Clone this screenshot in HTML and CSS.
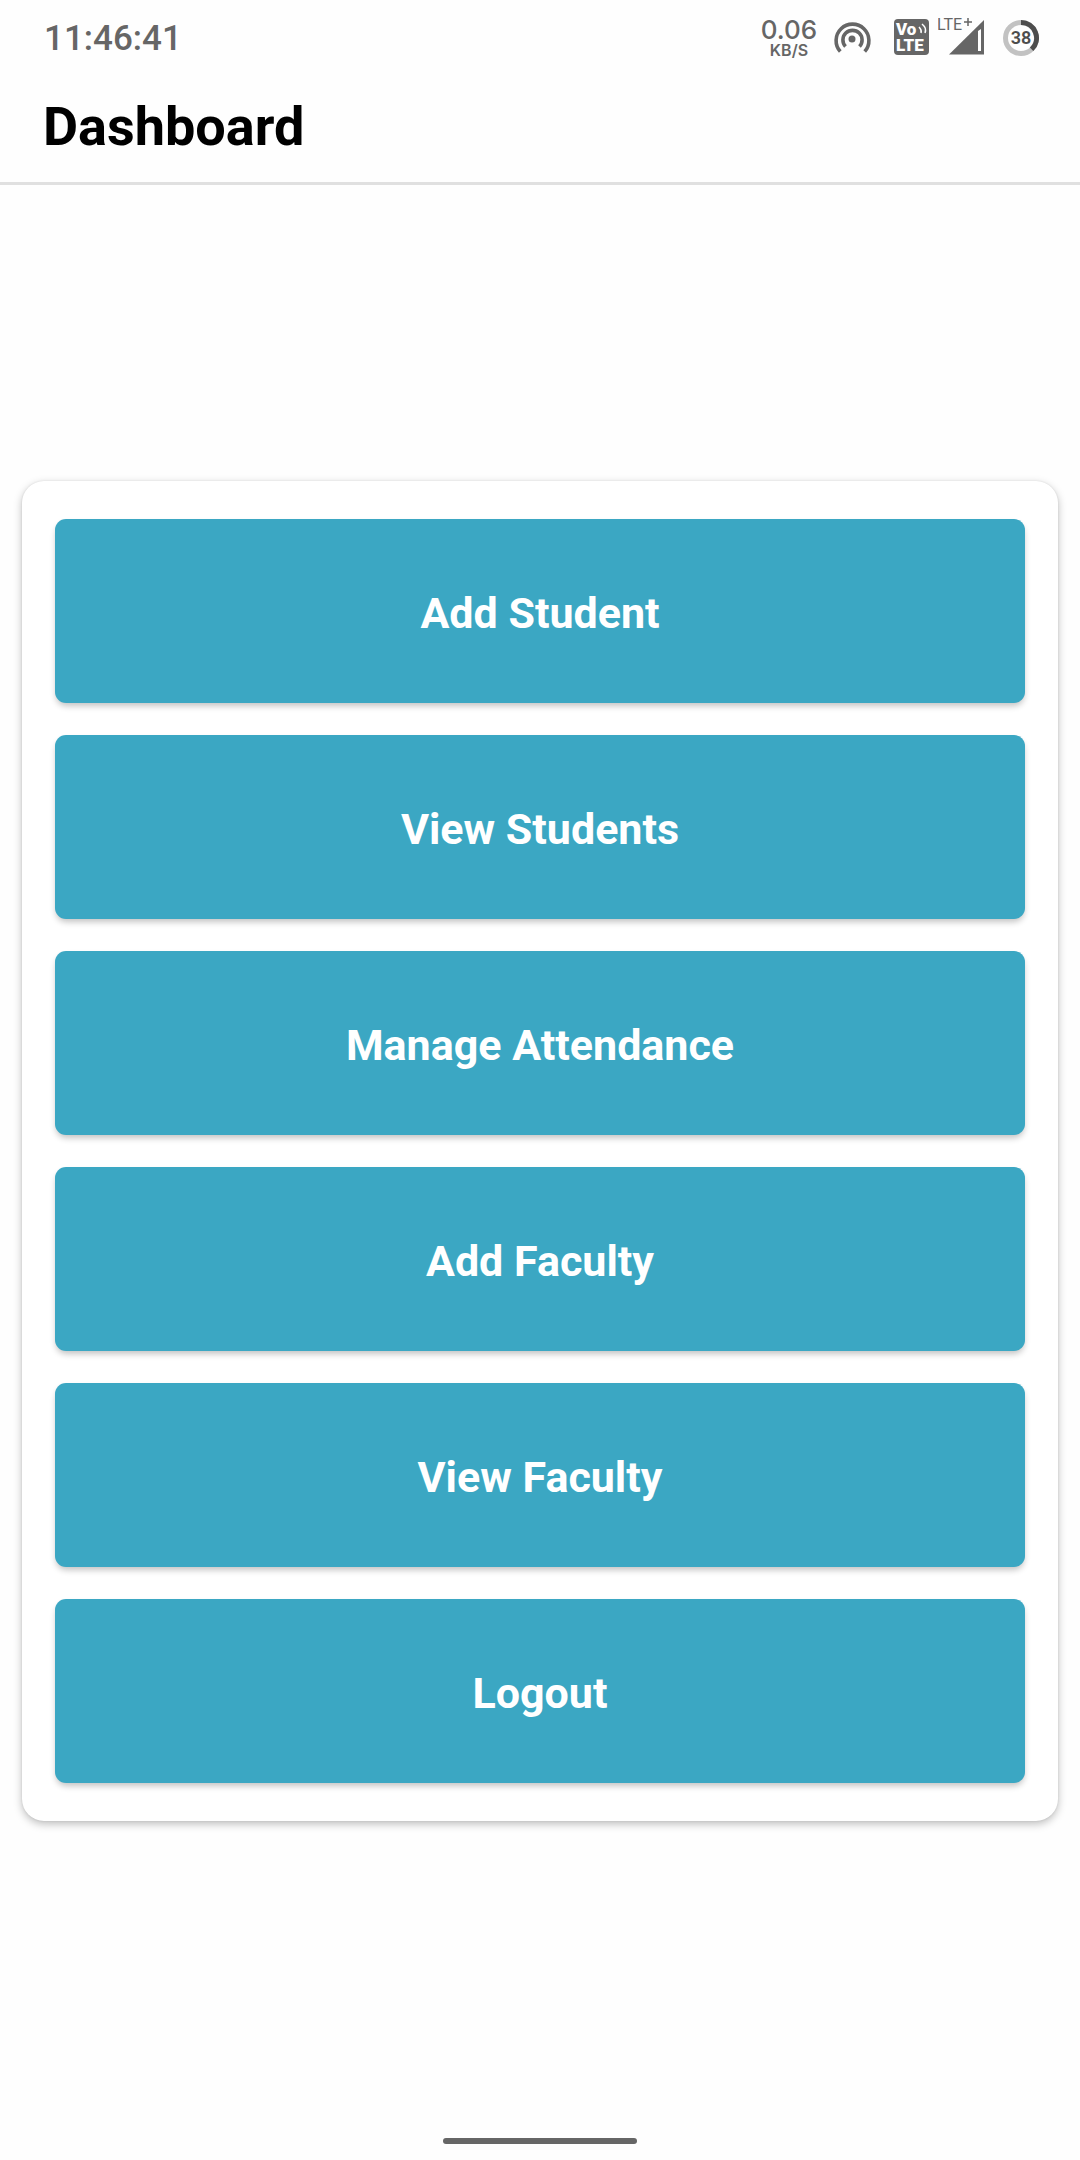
FILE: index.html
```html
<!DOCTYPE html>
<html lang="en">
<head>
<meta charset="utf-8">
<meta name="viewport" content="width=device-width, initial-scale=1">
<title>Dashboard</title>
<link rel="stylesheet" href="styles.css">
</head>
<body>
<div class="status-bar">
  <time class="clock">11:46:41</time>
  <div class="status-icons">
    <div class="speed">
      <span class="speed-value">0.06</span>
      <span class="speed-unit">KB/S</span>
    </div>
    <svg class="icon" width="54" height="76" viewBox="0 0 54 76" role="img" aria-label="Hotspot">
      <circle cx="27" cy="39" r="3.500" fill="#666"/>
      <g fill="none" stroke="#666" stroke-width="3.600">
        <path d="M20.500 46.500A9.600 9.600 0 1 1 34.500 46.500"/>
        <path d="M15.300 51.500A16.400 16.400 0 1 1 39.700 51.500"/>
      </g>
    </svg>
    <svg class="icon" width="43" height="76" viewBox="0 0 43 76" role="img" aria-label="VoLTE">
      <rect x="7" y="19" width="35" height="36" rx="4" fill="#666"/>
      <text class="volte" x="9" y="35">Vo</text>
      <text class="volte" x="9" y="51">LTE</text>
      <path d="M32 27q3 3 2 6M35 24q5 4 3 9" fill="none" stroke="#fff" stroke-width="1.500"/>
    </svg>
    <svg class="icon" width="57" height="76" viewBox="0 0 57 76" role="img" aria-label="Mobile signal">
      <text class="network" x="-1" y="30">LTE</text>
      <path d="M26 22h8M30 18v8" stroke="#666" stroke-width="1.500"/>
      <path d="M11 54.500L46 20v34.500z" fill="#666"/>
      <path d="M40 31l3-2v22h-3z" fill="#fff"/>
    </svg>
    <svg class="icon" width="36" height="76" viewBox="0 0 36 76" role="img" aria-label="Battery 38 percent">
      <g fill="none" stroke-width="5">
        <circle cx="18" cy="38" r="15.500" stroke="#c2c2c2"/>
        <path d="M18 22.500A15.500 15.500 0 0 1 28.600 49.300" stroke="#4d4d4d"/>
      </g>
      <text class="battery" x="18" y="44">38</text>
    </svg>
  </div>
</div>
<header class="app-header">
  <h1 class="title">Dashboard</h1>
</header>
<main class="content">
  <nav class="card" aria-label="Dashboard actions">
    <button class="action" type="button">Add Student</button>
    <button class="action" type="button">View Students</button>
    <button class="action" type="button">Manage Attendance</button>
    <button class="action" type="button">Add Faculty</button>
    <button class="action" type="button">View Faculty</button>
    <button class="action" type="button">Logout</button>
  </nav>
</main>
<div class="gesture-bar"><span class="handle"></span></div>
</body>
</html>
```

FILE: styles.css
```css
* {
  box-sizing: border-box;
}

body {
  margin: 0;
  min-height: 100vh;
  display: flex;
  flex-direction: column;
  background: #fefefe;
  font-family: Roboto, "Liberation Sans", sans-serif;
}

.status-bar {
  display: flex;
  justify-content: space-between;
  height: 76px;
  padding: 0 41px 0 44px;
  color: #666;
}

.clock {
  font-size: 35px;
  line-height: 78px;
  font-weight: 500;
}

.status-icons {
  display: flex;
  gap: 8px;
}

.icon {
  display: block;
}

.speed {
  display: flex;
  flex-direction: column;
  align-items: center;
  width: 56px;
  padding-top: 18px;
  font-family: Inter, sans-serif;
}

.speed-value {
  font-size: 26px;
  line-height: 24px;
  font-weight: 500;
}

.speed-unit {
  font-size: 16px;
  line-height: 16px;
  font-weight: 600;
}

.volte {
  font: 900 17px Roboto, sans-serif;
  fill: #fff;
}

.network {
  font: 400 16px Roboto, sans-serif;
  fill: #666;
}

.battery {
  font: 600 18px Roboto, sans-serif;
  fill: #4d4d4d;
  text-anchor: middle;
}

.app-header {
  padding: 19px 43px 23px;
  border-bottom: 3px solid #e0e0e0;
}

.title {
  margin: 0;
  color: #000;
  font-size: 54px;
  line-height: 64px;
  font-weight: 700;
}

.content {
  flex: 1;
  display: flex;
  flex-direction: column;
  justify-content: center;
  padding: 0 22px;
}

.card {
  display: flex;
  flex-direction: column;
  gap: 32px;
  padding: 38px 33px;
  border-radius: 22px;
  background: #fff;
  box-shadow: 0 3px 8px rgba(0, 0, 0, 0.26), 0 0 2px rgba(0, 0, 0, 0.1);
}

.action {
  height: 184px;
  padding: 4px 0 0;
  border: 0;
  border-radius: 11px;
  background: #3ba7c3;
  color: #fff;
  font-family: inherit;
  font-size: 43px;
  font-weight: 700;
  line-height: 52px;
  box-shadow: 0 4px 6px -1px rgba(0, 0, 0, 0.24);
}

.gesture-bar {
  display: flex;
  justify-content: center;
  height: 43px;
  padding-top: 21px;
}

.handle {
  width: 194px;
  height: 6px;
  border-radius: 3px;
  background: #666;
}
```
